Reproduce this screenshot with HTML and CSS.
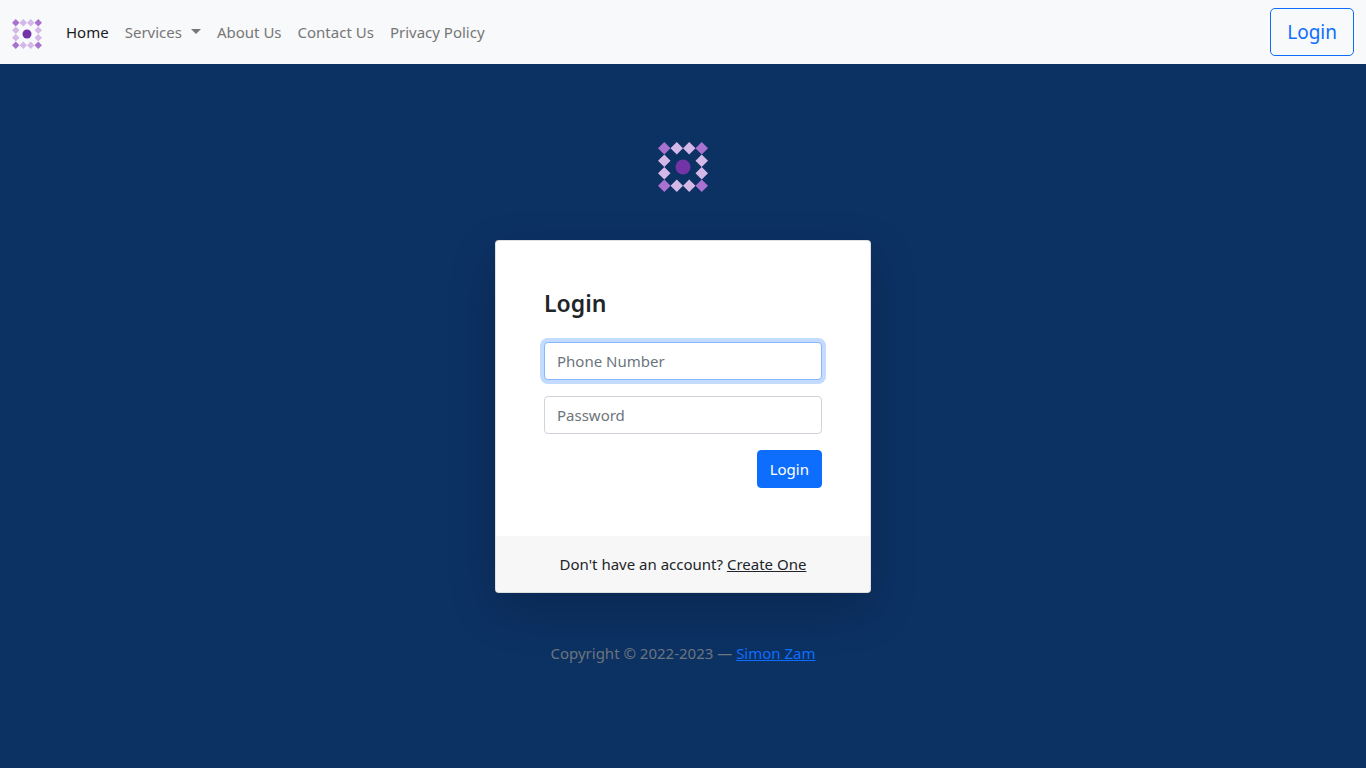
FILE: index.html
```html
<!DOCTYPE html>
<html lang="en">
<head>
<meta charset="utf-8">
<meta name="viewport" content="width=device-width, initial-scale=1">
<title>Login</title>
<link rel="stylesheet" href="styles.css">
</head>
<body>
<svg class="sprite" aria-hidden="true">
  <symbol id="logo" viewBox="0 0 50 50">
    <g fill="#a972d1"><path d="M6.3 0l6.2 6.2-6.2 6.3L0 6.2zM43.7 0L50 6.2l-6.3 6.3-6.2-6.3zM6.3 37.5l6.2 6.3L6.3 50 0 43.8zM43.7 37.5l6.3 6.3-6.3 6.2-6.2-6.2z"/></g>
    <g fill="#d4b8e8"><path d="M18.8 0L25 6.2l-6.2 6.3-6.3-6.3zM31.2 0l6.3 6.2-6.3 6.3L25 6.2zM18.8 37.5l6.2 6.3-6.2 6.2-6.3-6.2zM31.2 37.5l6.3 6.3-6.3 6.2-6.2-6.2zM6.3 12.5l6.2 6.3L6.3 25 0 18.8zM6.3 25l6.2 6.2-6.2 6.3L0 31.2zM43.7 12.5l6.3 6.3-6.3 6.2-6.2-6.2zM43.7 25l6.3 6.2-6.3 6.3-6.2-6.3z"/></g>
    <circle cx="25" cy="25" r="7.5" fill="#7334a8"/>
  </symbol>
</svg>
<nav class="navbar">
  <a class="brand" href="#" aria-label="Home page"><svg class="brand-logo"><use href="#logo"/></svg></a>
  <ul class="nav-list">
    <li><a class="nav-link active" href="#">Home</a></li>
    <li><a class="nav-link dropdown" href="#">Services</a></li>
    <li><a class="nav-link" href="#">About Us</a></li>
    <li><a class="nav-link" href="#">Contact Us</a></li>
    <li><a class="nav-link" href="#">Privacy Policy</a></li>
  </ul>
  <button class="btn btn-outline" type="button">Login</button>
</nav>
<main class="page">
  <svg class="page-logo" aria-hidden="true"><use href="#logo"/></svg>
  <section class="card">
    <form class="card-body">
      <h1 class="title">Login</h1>
      <input class="field" type="tel" placeholder="Phone Number" aria-label="Phone Number" autofocus>
      <input class="field" type="password" placeholder="Password" aria-label="Password">
      <button class="btn btn-primary" type="submit">Login</button>
    </form>
    <div class="card-footer">Don't have an account? <a class="dark-link" href="#">Create One</a></div>
  </section>
  <footer class="copyright">Copyright © 2022-2023 — <a class="link" href="#">Simon Zam</a></footer>
</main>
</body>
</html>
```
FILE: styles.css
```css
*, *::before, *::after { box-sizing: border-box; }
body {
  margin: 0;
  min-height: 100vh;
  background: #0c3163;
  color: #212529;
  font: 15px/24px "Noto Sans", sans-serif;
}
.sprite { position: absolute; width: 0; height: 0; }
.navbar {
  display: flex;
  align-items: center;
  padding: 8px 12px;
  background: #f8f9fa;
}
.brand { display: flex; margin-right: 16px; padding-top: 4px; }
.brand-logo { width: 30px; height: 30px; }
.nav-list {
  display: flex;
  flex: 1;
  margin: 0;
  padding: 0;
  list-style: none;
}
.nav-link {
  display: block;
  padding: 8px;
  color: #767676;
  text-decoration: none;
}
.nav-link.active { color: #1a1a1a; }
.dropdown::after {
  content: "";
  display: inline-block;
  margin-left: 9px;
  vertical-align: 4px;
  border: 5px solid transparent;
  border-top-color: currentColor;
  border-bottom: 0;
}
.btn {
  border: 1px solid #0d6efd;
  border-radius: 4px;
  padding: 6px 12px;
  font: inherit;
  cursor: pointer;
}
.btn-outline {
  padding: 8px 16px;
  border-radius: 5px;
  background: transparent;
  color: #0d6efd;
  font-size: 19px;
  line-height: 30px;
}
.btn-primary { align-self: flex-end; background: #0d6efd; color: #fff; }
.page {
  display: flex;
  flex-direction: column;
  align-items: center;
  padding: 78px 12px 48px;
}
.page-logo { width: 50px; height: 50px; margin-bottom: 48px; }
.card {
  width: 100%;
  max-width: 376px;
  border: 1px solid rgba(0, 0, 0, 0.125);
  border-radius: 4px;
  background: #fff;
  box-shadow: 0 16px 48px rgba(0, 0, 0, 0.175);
  overflow: hidden;
}
.card-body {
  display: flex;
  flex-direction: column;
  gap: 16px;
  padding: 48px;
}
.title { margin: 0 0 8px; font-size: 23px; line-height: 29px; font-weight: 600; }
.field {
  width: 100%;
  padding: 6px 12px;
  border: 1px solid #ced4da;
  border-radius: 4px;
  background: #fff;
  color: #212529;
  font: inherit;
}
.field::placeholder { color: #6c757d; opacity: 1; }
.field:focus {
  outline: 0;
  border-color: #86b7fe;
  box-shadow: 0 0 0 4px rgba(13, 110, 253, 0.25);
}
.card-footer {
  padding: 16px;
  background: #f7f7f7;
  text-align: center;
}
.dark-link { color: #212529; }
.copyright { margin-top: 48px; color: #6c757d; }
.link { color: #0d6efd; }
```
